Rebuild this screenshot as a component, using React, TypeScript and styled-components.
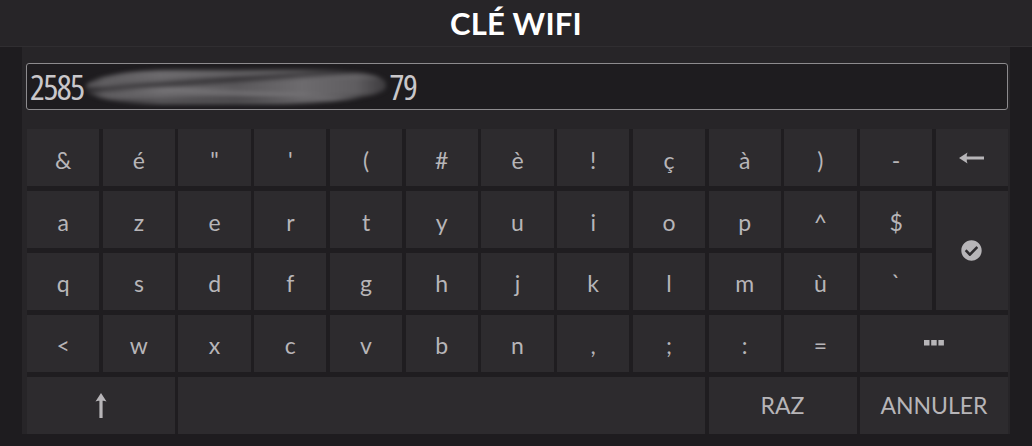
import React from "react";
import styled, { createGlobalStyle } from "styled-components";
import { FaCheckCircle } from "react-icons/fa";

const Global = createGlobalStyle`
  html, body { margin: 0; padding: 0; background: #1e1c1f; }
  body { font-family: Lato, "Open Sans", sans-serif; }
  * { box-sizing: border-box; }
`;

const Page = styled.div`
  width: 1032px;
  height: 446px;
  display: flex;
  flex-direction: column;
  background: #1e1c1f;
  overflow: hidden;
`;

const Header = styled.header`
  height: 47px;
  flex: none;
  display: flex;
  align-items: center;
  justify-content: center;
  background: #272528;
  border-bottom: 1px solid #302e31;
`;

const Title = styled.h1`
  margin: 0;
  font-family: Lato, sans-serif;
  font-weight: 700;
  font-size: 31px;
  line-height: 1;
  color: #ffffff;
  letter-spacing: 0.2px;
`;

const Body = styled.div`
  flex: 1;
  padding: 0 22px;
  display: flex;
  flex-direction: column;
`;

const Panel = styled.main`
  background: #272528;
  padding: 16px 2px 0 4px;
  display: flex;
  flex-direction: column;
  gap: 19px;
`;

const Field = styled.div`
  position: relative;
  height: 47px;
  border: 1px solid #8d8b8e;
  border-radius: 3px;
  background: #1e1c1f;
  display: flex;
  align-items: center;
  padding-left: 3px;
`;

const Digits = styled.span`
  flex: none;
  white-space: nowrap;
  font-family: "Open Sans", sans-serif;
  font-stretch: 75%;
  font-size: 35px;
  line-height: 40px;
  color: #c9c7ca;
  letter-spacing: -1.5px;
`;

const Smear = styled.span`
  display: inline-block;
  flex: none;
  width: 300px;
  height: 34px;
  margin-left: 2px;
  filter: blur(2px);
  border-radius: 30% 20% 40% 25% / 50% 40% 50% 45%;
  background:
    linear-gradient(176deg, transparent 0 28%, rgba(30,28,31,0.75) 36%, transparent 44%),
    linear-gradient(183deg, transparent 0 55%, rgba(150,148,151,0.45) 62%, transparent 70%),
    linear-gradient(179deg, transparent 0 74%, rgba(35,33,36,0.6) 80%, transparent 86%),
    linear-gradient(181deg, transparent 0 12%, rgba(130,128,131,0.4) 18%, transparent 24%),
    linear-gradient(90deg, #3a383b 0%, #5e5c5f 6%, #6a686b 25%, #5a585b 50%, #6d6b6e 72%, #5f5d60 90%, #3c3a3d 100%);
`;

const Tail = styled(Digits)`
  margin-left: 4px;
`;

const Keyboard = styled.div`
  display: grid;
  grid-template-columns: repeat(13, 1fr);
  grid-template-rows: repeat(5, 1fr);
  column-gap: 3.4px;
  row-gap: 4.4px;
  height: 305px;
  margin-left: 1px;
  background: #1f1d20;
`;

const Key = styled.div<{ $cols?: number; $rows?: number }>`
  grid-column: span ${(p) => p.$cols ?? 1};
  grid-row: span ${(p) => p.$rows ?? 1};
  background: #2d2b2e;
  display: flex;
  align-items: center;
  justify-content: center;
  font-family: Lato, sans-serif;
  font-size: 23px;
  color: #b7b5b8;
  padding-top: 4px;
  user-select: none;
`;

const WordKey = styled(Key)`
  padding-top: 0;
`;

const IconKey = styled(Key)`
  padding-top: 0;
`;

const LongArrow = ({ dir }: { dir: "left" | "up" }) =>
  dir === "left" ? (
    <svg width="25" height="12" viewBox="0 0 25 12">
      <path d="M0 6 L8.5 0.5 Q7.5 3 7.8 4.4 L25 4.4 L25 7.6 L7.8 7.6 Q7.5 9 8.5 11.5 Z" fill="#b7b5b8" />
    </svg>
  ) : (
    <svg width="12" height="25" viewBox="0 0 12 25">
      <path d="M6 0 L11.5 8.5 Q9 7.5 7.6 7.8 L7.6 25 L4.4 25 L4.4 7.8 Q3 7.5 0.5 8.5 Z" fill="#b7b5b8" />
    </svg>
  );

const Ellipsis = () => (
  <svg width="20" height="6" viewBox="0 0 20 6">
    <rect x="0" y="0" width="5.5" height="5.5" fill="#b7b5b8" />
    <rect x="7.2" y="0" width="5.5" height="5.5" fill="#b7b5b8" />
    <rect x="14.4" y="0" width="5.5" height="5.5" fill="#b7b5b8" />
  </svg>
);

const row1 = ["&", "é", '"', "'", "(", "#", "è", "!", "ç", "à", ")", "-"];
const row2 = ["a", "z", "e", "r", "t", "y", "u", "i", "o", "p", "^", "$"];
const row3 = ["q", "s", "d", "f", "g", "h", "j", "k", "l", "m", "ù", "`"];
const row4 = ["<", "w", "x", "c", "v", "b", "n", ",", ";", ":", "="];

export default function App() {
  return (
    <Page>
      <Global />
      <Header>
        <Title>CLÉ WIFI</Title>
      </Header>
      <Body>
        <Panel>
          <Field>
            <Digits>2585</Digits>
            <Smear />
            <Tail>79</Tail>
          </Field>
          <Keyboard>
            {row1.map((k) => (
              <Key key={"r1" + k}>{k}</Key>
            ))}
            <IconKey>
              <LongArrow dir="left" />
            </IconKey>
            {row2.map((k) => (
              <Key key={"r2" + k}>{k}</Key>
            ))}
            <IconKey $rows={2}>
              <FaCheckCircle size={21} />
            </IconKey>
            {row3.map((k) => (
              <Key key={"r3" + k}>{k}</Key>
            ))}
            {row4.map((k) => (
              <Key key={"r4" + k}>{k}</Key>
            ))}
            <IconKey $cols={2}>
              <Ellipsis />
            </IconKey>
            <IconKey $cols={2}>
              <LongArrow dir="up" />
            </IconKey>
            <Key $cols={7} />
            <WordKey $cols={2}>RAZ</WordKey>
            <WordKey $cols={2}>ANNULER</WordKey>
          </Keyboard>
        </Panel>
      </Body>
    </Page>
  );
}
